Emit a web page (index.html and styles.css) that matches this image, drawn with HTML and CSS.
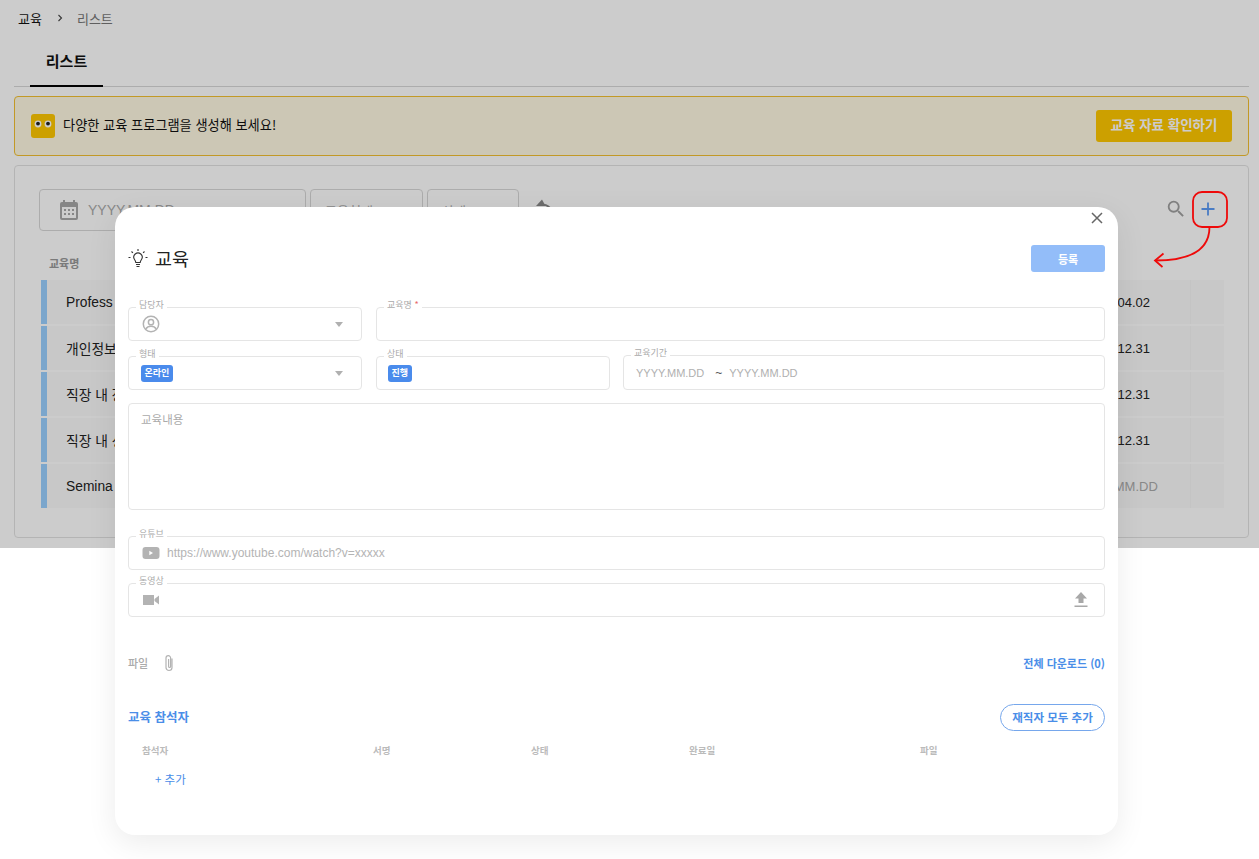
FILE: index.html
```html
<!DOCTYPE html>
<html lang="ko">
<head>
<meta charset="utf-8">
<title>교육</title>
<link rel="stylesheet" href="styles.css">
</head>
<body>
<div class="page">
  <nav class="crumbs"><span class="crumb-main">교육</span>
    <svg class="crumb-sep" width="8" height="8" viewBox="0 0 8 8"><path d="M2.500 1l3 3-3 3" fill="none" stroke="#444" stroke-width="1.100"/></svg>
    <span class="crumb-sub">리스트</span></nav>
  <div class="tabs"><span class="tab">리스트</span></div>
  <div class="banner">
    <span class="owl"><svg width="24" height="24" viewBox="0 0 24 24"><circle cx="7" cy="10" r="3.400" fill="#fff"/><circle cx="17" cy="10" r="3.400" fill="#fff"/><circle cx="7" cy="9.600" r="1.900" fill="#222"/><circle cx="17" cy="9.600" r="1.900" fill="#222"/></svg></span>
    <span class="banner-text">다양한 교육 프로그램을 생성해 보세요!</span>
    <button class="banner-btn">교육 자료 확인하기</button>
  </div>
  <section class="card">
    <div class="filters">
      <div class="filter filter-date">
        <svg width="24" height="24" viewBox="0 0 24 24"><path fill="#a8a8a8" d="M19 4h-1V2h-2v2H8V2H6v2H5a2 2 0 0 0-2 2v14a2 2 0 0 0 2 2h14a2 2 0 0 0 2-2V6a2 2 0 0 0-2-2zm0 16H5V9h14v11zM7 11h2v2H7zm4 0h2v2h-2zm4 0h2v2h-2zm-8 4h2v2H7zm4 0h2v2h-2zm4 0h2v2h-2z"/></svg>
        <span class="filter-ph">YYYY.MM.DD</span>
        <svg class="filter-chev" width="10" height="6" viewBox="0 0 10 6"><path d="M1 1l4 4 4-4" fill="none" stroke="#999" stroke-width="1.300"/></svg>
      </div>
      <div class="filter filter-type"><span>교육형태</span></div>
      <div class="filter filter-state"><span>상태</span></div>
      <svg class="reset" width="20" height="20" viewBox="0 0 20 20"><path fill="#888" d="M9 0.500L3 7h9.500z"/><path d="M9 6c4-.8 9 1.800 9 7a8 8 0 0 1-16 0" fill="none" stroke="#888" stroke-width="2"/></svg>
      <div class="tools">
        <svg width="22" height="22" viewBox="0 0 24 24"><path fill="#a0a0a0" d="M15.500 14h-.79l-.28-.27A6.470 6.470 0 0 0 16 9.500 6.500 6.500 0 1 0 9.500 16c1.610 0 3.090-.59 4.230-1.570l.27.28v.79l5 4.990L20.490 19l-4.990-5zm-6 0C7.010 14 5 11.990 5 9.500S7.010 5 9.500 5 14 7.010 14 9.500 11.990 14 9.500 14z"/></svg>
        <svg width="20" height="20" viewBox="0 0 20 20"><path d="M10 3.500v13M3.500 10h13" stroke="#5d9bf5" stroke-width="1.800" fill="none"/></svg>
      </div>
    </div>
    <div class="thead">교육명</div>
    <div class="rows">
      <div class="row"><span class="row-name">Profess</span><span class="row-date">2024.04.02</span><span class="row-act"></span></div>
      <div class="row"><span class="row-name">개인정보</span><span class="row-date">2024.12.31</span><span class="row-act"></span></div>
      <div class="row"><span class="row-name">직장 내 장애인</span><span class="row-date">2024.12.31</span><span class="row-act"></span></div>
      <div class="row"><span class="row-name">직장 내 성희롱</span><span class="row-date">2024.12.31</span><span class="row-act"></span></div>
      <div class="row"><span class="row-name">Semina</span><span class="row-date row-date-empty">YYYY.MM.DD</span><span class="row-act"></span></div>
    </div>
  </section>
  <div class="dim"></div>
</div>

<div class="modal">
  <div class="close-row">
    <svg width="14" height="14" viewBox="0 0 14 14"><path d="M2 2l10 10M12 2L2 12" stroke="#666" stroke-width="1.500" fill="none"/></svg>
  </div>
  <header class="modal-head">
    <svg width="20" height="22" viewBox="0 0 20 22" fill="none" stroke="#333" stroke-width="1.100"><path d="M6.500 11.500a4.200 4.200 0 1 1 7 0c-.7 1-1.200 1.700-1.300 3h-4.400c-.1-1.300-.6-2-1.300-3zM8 16.500h4M8.500 18.500h3M10 1v2M3.500 3.500l1.400 1.400M16.500 3.500l-1.400 1.400M0.500 9.500h2M17.500 9.500h2"/></svg>
    <h1 class="modal-title">교육</h1>
    <button class="save">등록</button>
  </header>

  <div class="field-row">
    <div class="field f-side"><label class="lab">담당자</label>
      <svg width="18" height="18" viewBox="0 0 18 18" fill="none" stroke="#b3b3b3" stroke-width="1.500"><circle cx="9" cy="9" r="7.700"/><circle cx="9" cy="7.200" r="2.600"/><path d="M3.800 14c1.200-2 3-2.700 5.200-2.700s4 .7 5.200 2.700"/></svg>
      <i class="caret"></i></div>
    <div class="field f-grow"><label class="lab">교육명 <b class="req">*</b></label></div>
  </div>
  <div class="field-row row-two">
    <div class="field f-side f-tagged"><label class="lab">형태</label><span class="tag">온라인</span><i class="caret"></i></div>
    <div class="field f-side f-state"><label class="lab">상태</label><span class="tag">진행</span></div>
    <div class="field f-grow f-period"><label class="lab">교육기간</label><span class="date-ph">YYYY.MM.DD</span><span class="tilde">~</span><span class="date-ph">YYYY.MM.DD</span></div>
  </div>
  <div class="field f-area"><span class="area-ph">교육내용</span></div>
  <div class="field f-wide f-youtube"><label class="lab">유튜브</label>
    <svg width="18" height="14" viewBox="0 0 18 14"><rect x="0.500" y="1" width="17" height="12" rx="3" fill="#b3b3b3"/><path d="M7.300 4.700v4.600L11 7z" fill="#fff"/></svg>
    <span class="url-ph">https://www.youtube.com/watch?v=xxxxx</span></div>
  <div class="field f-wide f-video"><label class="lab">동영상</label>
    <svg width="16" height="12" viewBox="0 0 16 12"><path fill="#b3b3b3" d="M0 1h11v10H0zM11.500 5L16 1.500v9L11.500 7z"/></svg>
    <svg class="upload" width="14" height="16" viewBox="0 0 14 16"><path fill="#a8a8a8" d="M7 0l6 6.500H9.500V11h-5V6.500H1zM.5 13.500h13V15H.5z"/></svg></div>

  <div class="file-row">
    <span class="file-lab">파일</span>
    <svg width="12" height="18" viewBox="0 0 12 18" fill="none" stroke="#b3b3b3" stroke-width="1.200"><path d="M9 4.500v9a3 3 0 0 1-6 0V4a2.300 2.300 0 0 1 4.600 0v8.500a1 1 0 0 1-2 0V5"/></svg>
    <a class="download">전체 다운로드 (0)</a>
  </div>
  <div class="att-head">
    <h2 class="att-title">교육 참석자</h2>
    <button class="pill">재직자 모두 추가</button>
  </div>
  <div class="att-cols"><span>참석자</span><span>서명</span><span>상태</span><span>완료일</span><span>파일</span></div>
  <a class="add">+ 추가</a>
</div>

<svg class="annot" width="100" height="90" viewBox="0 0 100 90" fill="none" stroke="#ee0a0a" stroke-width="1.800">
  <rect x="43" y="2" width="34" height="35" rx="9"/>
  <path d="M59.500 37c0 22-18 33.500-54 33.500"/>
  <path d="M13.500 63.500L5 70.500l7.500 6.500"/>
</svg>
</body>
</html>
```
FILE: styles.css
```css
* { box-sizing: border-box; }
html, body { margin: 0; padding: 0; }
body {
  background: #fff;
  width: 1259px;
  height: 859px;
  overflow: hidden;
  position: relative;
  font-family: "Noto Sans CJK KR", "Liberation Sans", sans-serif;
  color: #222;
}
.page { position: relative; height: 548px; padding: 0 10px 10px 14px; background: #fff; }
.dim { position: absolute; inset: 0; background: rgba(0, 0, 0, .2); }

.crumbs { display: flex; align-items: center; height: 36px; margin-left: 4px; font-size: 13px; }
.crumb-main { color: #111; }
.crumb-sep { margin: 0 13px 0 14px; }
.crumb-sub { color: #777; }

.tabs { height: 51px; border-bottom: 1px solid #d8d8d8; padding-left: 16px; display: flex; }
.tab {
  width: 73px; height: 51px; padding-top: 14px;
  text-align: center; font-size: 15px; font-weight: 700; color: #111;
  border-bottom: 2px solid #000;
}

.banner {
  margin-top: 9px; height: 60px; display: flex; align-items: center;
  padding: 0 16px;
  background: #fff9e3; border: 1px solid #f3c030; border-radius: 4px;
}
.owl { width: 24px; height: 24px; background: #ffc800; border-radius: 3px; display: block; }
.owl svg { display: block; }
.banner-text { margin-left: 8px; padding-bottom: 4px; font-size: 13.200px; color: #111; }
.banner-btn {
  margin-left: auto; width: 136px; height: 32px; border: 0; border-radius: 3px; padding: 0 0 4px;
  background: #ffc800; color: #fff; font: 700 13.500px "Noto Sans CJK KR", sans-serif;
}

.card {
  margin-top: 9px; height: 373px; padding: 23px 24px 0 26px;
  background: #fff; border: 1px solid #e2e2e2; border-radius: 4px;
}
.filters { display: flex; align-items: flex-start; margin-left: -2px; gap: 4px; }
.filter { height: 42px; border: 1px solid #d8d8d8; border-radius: 4px; display: flex; align-items: center; font-size: 13px; color: #aaa; }
.filter-date { width: 267px; padding-left: 17px; padding-right: 20px; }
.filter-ph { margin-left: 7px; font-family: "Liberation Sans", sans-serif; font-size: 14px; }
.filter-chev { margin-left: auto; }
.filter-type { width: 113px; padding-left: 14px; }
.filter-state { width: 92px; padding-left: 14px; }
.reset { margin: 10px 0 0 10px; }
.tools { margin-left: auto; margin-right: 6px; display: flex; align-items: center; gap: 11px; height: 40px; }

.thead { margin: 22px 0 0 8px; height: 27px; font-size: 11px; font-weight: 700; color: #999; padding-top: 2px; }
.rows { display: flex; flex-direction: column; gap: 2px; }
.row {
  height: 44px; display: flex; align-items: center;
  background: #fbfbfb; border-left: 6px solid #9ad0ff;
  font-family: "Liberation Sans", "Noto Sans CJK KR", sans-serif; font-size: 13px; color: #222;
}
.row-name { padding-left: 19px; flex: 1; font-size: 13.800px; }
.row-date { width: 145px; text-align: center; }
.row-date-empty { color: #aaa; }
.row-act { width: 34px; height: 44px; border-left: 1px solid #f6f6f6; }

.modal {
  position: absolute; left: 115px; top: 207px; width: 1003px; height: 628px;
  background: #fff; border-radius: 20px; padding: 0 13px;
  box-shadow: 0 8px 30px rgba(0, 0, 0, .08);
}
.close-row { height: 38px; padding: 4px 1px 0 0; display: flex; justify-content: flex-end; align-items: flex-start; }
.modal-head { height: 27px; display: flex; align-items: center; }
.modal-title { margin: 0 0 2px 7px; font-size: 18.500px; font-weight: 400; color: #222; }
.save {
  margin-left: auto; width: 74px; height: 27px; border: 0; border-radius: 3px;
  background: #93bdf9; color: #fff; font: 700 11px "Noto Sans CJK KR", sans-serif;
}

.field-row { display: flex; gap: 14px; margin-top: 35px; }
.row-two { margin-top: 15px; }
.field {
  position: relative; height: 34px; display: flex; align-items: center;
  border: 1px solid #e5e5e5; border-radius: 4px; padding-left: 13px;
}
.f-side { width: 234px; }
.f-tagged { padding-left: 12px; }
.f-state { padding-left: 11px; }
.f-grow { flex: 1; }
.f-period { margin-top: -1px; margin-left: -1px; height: 35px; padding-left: 12px; }
.lab {
  position: absolute; left: 7px; top: -10px; padding: 0 3px;
  background: #fff; font-size: 9px; line-height: 13px; color: #aaa;
}
.req { color: #e86a6a; font-weight: 400; }
.caret {
  margin-left: auto; margin-right: 18px;
  border-top: 5px solid #b0b0b0; border-left: 4.500px solid transparent; border-right: 4.500px solid transparent;
}
.tag {
  height: 17px; padding: 0 3.500px; border-radius: 3px; background: #4a8bec; color: #fff;
  font-size: 9px; font-weight: 700; line-height: 16px;
}
.date-ph { font: 11px "Liberation Sans", sans-serif; color: #b0b0b0; }
.tilde { margin: 0 7px 0 11px; font: 12px "Liberation Sans", sans-serif; color: #555; }
.f-area { height: 107px; margin-top: 13px; align-items: flex-start; padding-top: 7px; padding-left: 12px; }
.area-ph { font-size: 11.500px; color: #aaa; }
.f-wide { margin-top: 13px; }
.f-youtube { margin-top: 26px; }
.url-ph { margin-left: 7px; font: 12px "Liberation Sans", sans-serif; color: #b4b4b4; }
.upload { margin-left: auto; margin-right: 16px; }
.f-video svg:first-of-type { margin-left: 1px; }

.file-row { display: flex; align-items: center; margin-top: 37px; height: 18px; }
.file-lab { font-size: 11px; font-weight: 500; color: #aaa; margin-right: 15px; }
.download { margin-left: auto; font-size: 11px; font-weight: 700; color: #4a8ee8; }
.att-head { display: flex; align-items: center; justify-content: space-between; margin-top: 32px; height: 27px; }
.att-title { margin: 0 0 3px; font-size: 12.500px; font-weight: 700; color: #4a8ee8; }
.pill {
  width: 105px; height: 27px; background: #fff; border: 1px solid #76a7ec; border-radius: 14px;
  color: #4a8ee8; font: 700 11.500px "Noto Sans CJK KR", sans-serif; padding: 0 0 2px;
}
.att-cols {
  display: grid; grid-template-columns: 231px 158px 158px 231px 1fr;
  margin: 12px 0 0 14px; font-size: 9.500px; font-weight: 700; color: #bbb; line-height: 14px;
}
.add { display: block; margin: 14px 0 0 27px; font-size: 11.500px; color: #4a8ee8; }

.annot { position: absolute; left: 1150px; top: 190px; }
```
